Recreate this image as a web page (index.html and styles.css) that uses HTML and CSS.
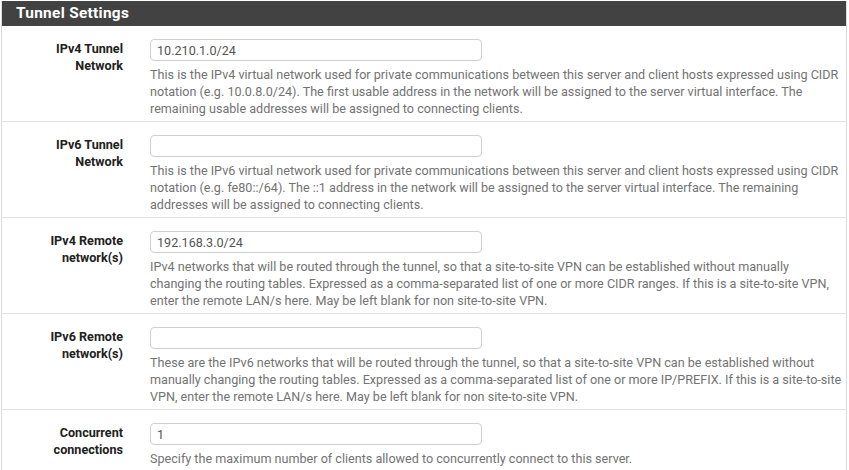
FILE: index.html
```html
<!DOCTYPE html>
<html lang="en">
  <head>
    <meta charset="UTF-8" />
    <meta name="viewport" content="width=device-width, initial-scale=1.0" />
    <title>Tunnel Settings</title>
    <link rel="stylesheet" href="styles.css">
  </head>
  <body>
    <section class="panel">
      <h2 class="panel_titel">Tunnel Settings</h2>

      <div class="felt">
        <label class="felt_navn">IPv4 Tunnel<br />Network</label>
        <div class="felt_input">
          <input type="text" value="10.210.1.0/24" />
          <p class="hjaelp">This is the IPv4 virtual network used for private communications between this server and client hosts expressed using CIDR notation (e.g. 10.0.8.0/24). The first usable address in the network will be assigned to the server virtual interface. The remaining usable addresses will be assigned to connecting clients.</p>
        </div>
      </div>

      <div class="felt">
        <label class="felt_navn">IPv6 Tunnel<br />Network</label>
        <div class="felt_input">
          <input type="text" value="" />
          <p class="hjaelp">This is the IPv6 virtual network used for private communications between this server and client hosts expressed using CIDR notation (e.g. fe80::/64). The ::1 address in the network will be assigned to the server virtual interface. The remaining addresses will be assigned to connecting clients.</p>
        </div>
      </div>

      <div class="felt">
        <label class="felt_navn">IPv4 Remote<br />network(s)</label>
        <div class="felt_input">
          <input type="text" value="192.168.3.0/24" />
          <p class="hjaelp">IPv4 networks that will be routed through the tunnel, so that a site-to-site VPN can be established without manually changing the routing tables. Expressed as a comma-separated list of one or more CIDR ranges. If this is a site-to-site VPN, enter the remote LAN/s here. May be left blank for non site-to-site VPN.</p>
        </div>
      </div>

      <div class="felt">
        <label class="felt_navn">IPv6 Remote<br />network(s)</label>
        <div class="felt_input">
          <input type="text" value="" />
          <p class="hjaelp">These are the IPv6 networks that will be routed through the tunnel, so that a site-to-site VPN can be established without manually changing the routing tables. Expressed as a comma-separated list of one or more IP/PREFIX. If this is a site-to-site VPN, enter the remote LAN/s here. May be left blank for non site-to-site VPN.</p>
        </div>
      </div>

      <div class="felt">
        <label class="felt_navn">Concurrent<br />connections</label>
        <div class="felt_input">
          <input type="text" value="1" />
          <p class="hjaelp">Specify the maximum number of clients allowed to concurrently connect to this server.</p>
        </div>
      </div>
    </section>
  </body>
</html>
```

FILE: styles.css
```css
* {
  box-sizing: border-box;
}
body {
  margin: 0;
  padding: 1px 0 0 1px;
  background-color: white;
  font-family: Roboto, "Liberation Sans", sans-serif;
  font-size: 12.6px;
}
.panel {
  width: 846px;
  border: 1px solid #dcdcdc;
  border-top: none;
  background-color: white;
}
.panel_titel {
  margin: 0;
  height: 25px;
  padding: 0 14px;
  background-color: #424242;
  color: white;
  font-size: 15.4px;
  font-weight: bold;
  line-height: 25px;
  letter-spacing: 0.3px;
}
.felt {
  display: flex;
  gap: 27px;
  padding: 13px 0 4px;
  border-bottom: 1px solid #e2e2e2;
}
.felt_navn {
  width: 121px;
  flex-shrink: 0;
  padding-top: 1px;
  text-align: right;
  font-weight: bold;
  line-height: 17px;
  color: #212121;
}
.felt_input {
  flex: 1;
  padding-right: 4px;
}
.felt_input input {
  display: block;
  width: 332px;
  height: 22px;
  padding: 0 6px;
  border: 1px solid #cfcfcf;
  border-radius: 4px;
  font-family: inherit;
  font-size: 12.6px;
  color: #555;
}
.hjaelp {
  margin: 5px 0 0;
  line-height: 17px;
  color: #737373;
}
```
